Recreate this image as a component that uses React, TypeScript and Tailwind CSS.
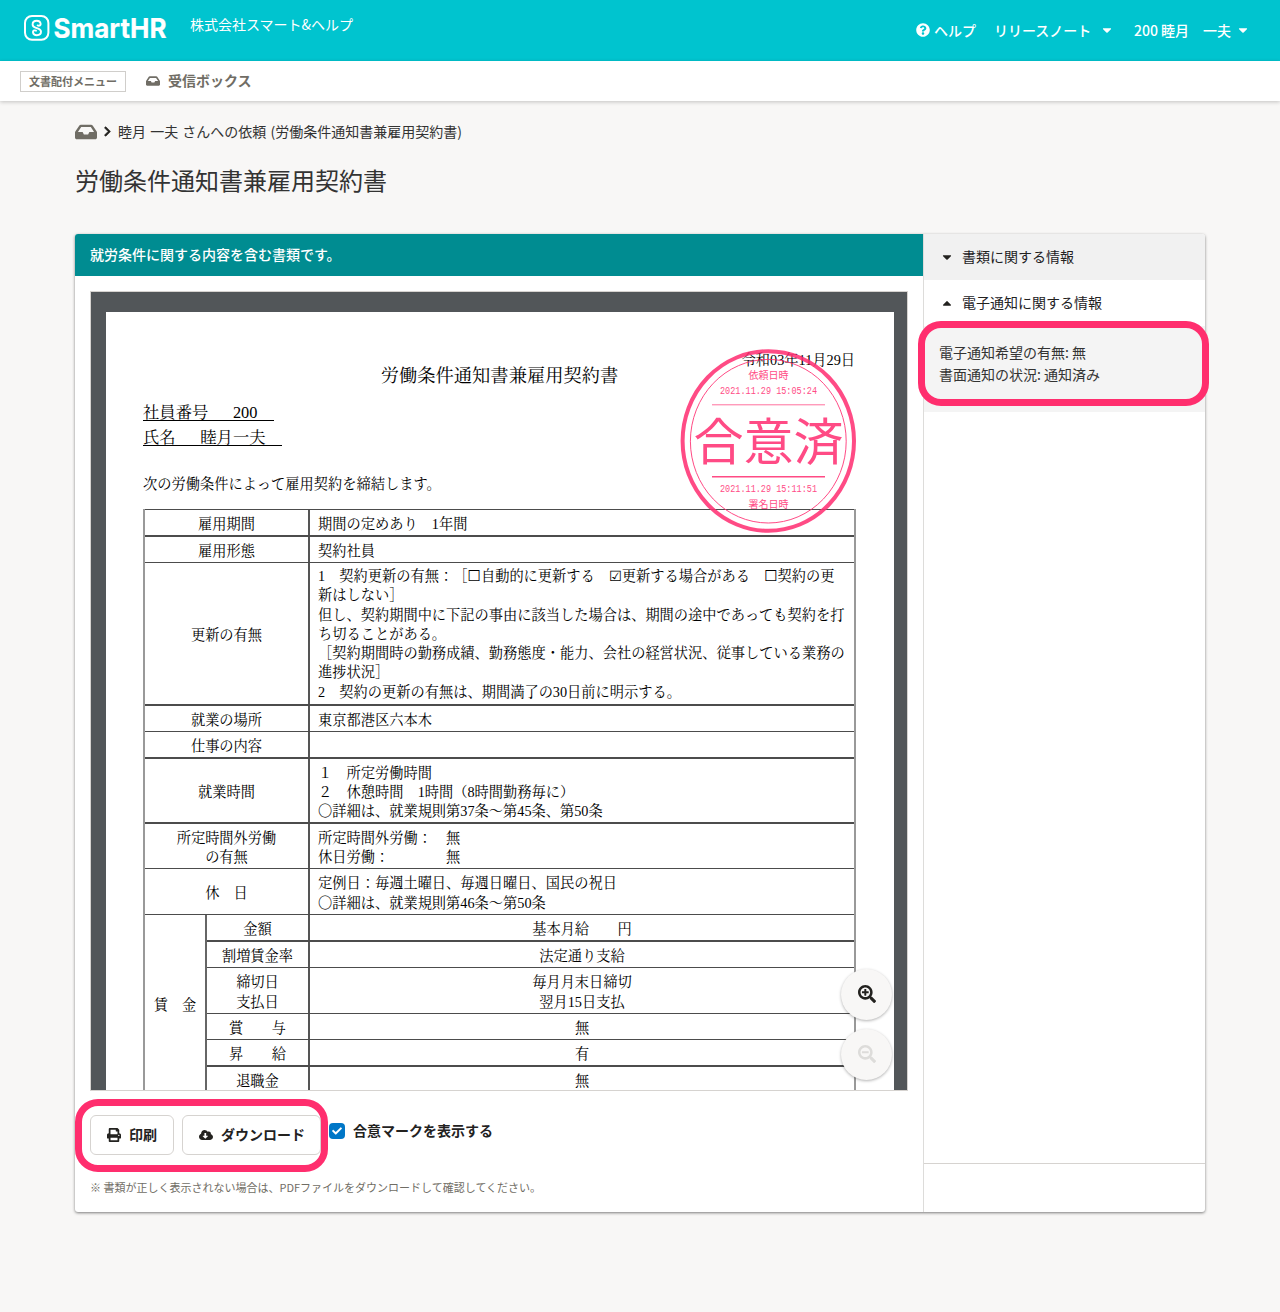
import React from "react";
import {
  FaInbox,
  FaQuestionCircle,
  FaCaretDown,
  FaCaretUp,
  FaPrint,
  FaCloudDownloadAlt,
  FaChevronRight,
  FaCheck,
  FaSearchPlus,
  FaSearchMinus,
} from "react-icons/fa";

function Logo() {
  return (
    <svg width="150" height="36" viewBox="0 0 150 36" className="block overflow-visible" aria-label="SmartHR">
      <rect x="2" y="2" width="23.4" height="23.8" rx="7" fill="none" stroke="#fff" strokeWidth="2" />
      <g fill="none" stroke="#fff" strokeWidth="1.9" strokeLinecap="round" strokeLinejoin="round">
        <path d="M14.6 11.4C16.6 12.2 18 11.2 17.6 9.4C17.2 7.7 15.6 6.8 13.8 6.8C11.4 6.8 9.6 8.3 9.6 10.4C9.6 12.2 10.8 13 12.4 13.6L15.2 14.6C16.8 15.2 18 16 18 17.8C18 19.9 16.2 21.2 13.8 21.2C11.6 21.2 10.3 20.1 10 18.5C9.7 16.8 11 15.9 13 16.7" />
      </g>
      <text x="30.5" y="24.2" fill="#fff" stroke="#fff" strokeWidth="0.2" fontFamily="Inter, sans-serif" fontWeight="700" fontSize="27.3" textLength="113" lengthAdjust="spacingAndGlyphs">
        SmartHR
      </text>
    </svg>
  );
}

function Header() {
  return (
    <header className="flex h-[61px] items-start justify-between bg-[#00c4cf] pr-[30px] pl-[23px] text-white">
      <div className="flex">
        <div className="h-[50px] w-[144px] pt-[14px]">
          <Logo />
        </div>
        <div className="ml-[23px] pt-[14px] leading-5">株式会社スマート&amp;ヘルプ</div>
      </div>
      <div className="flex items-center pt-5 leading-5 font-medium">
        <FaQuestionCircle className="mr-1 size-[14px]" />
        <span className="w-[60px]">ヘルプ</span>
        <span className="w-[106px]">リリースノート</span>
        <FaCaretDown className="size-[14px]" />
        <span className="ml-[20px] w-[102px]">200 睦月　一夫</span>
        <FaCaretDown className="size-[14px]" />
      </div>
    </header>
  );
}

function AppNav() {
  return (
    <nav className="relative flex h-10 items-center bg-white pl-5 font-bold text-[#706d65] shadow-[0_1px_4px_rgba(0,0,0,0.22)]">
      <div className="flex h-[21px] w-[106px] items-center justify-center border border-[#d0cecb] text-[11px]">文書配付メニュー</div>
      <FaInbox className="ml-5 size-[14px]" />
      <span className="ml-2 pb-[2px]">受信ボックス</span>
    </nav>
  );
}

type RowProps = { height: string; label: React.ReactNode; children?: React.ReactNode };

function Row({ height, label, children }: RowProps) {
  return (
    <div className={"flex border-[#4c4c4c] whitespace-pre " + height}>
      <div className="flex w-[163px] shrink-0 items-center justify-center pt-1 text-center">{label}</div>
      <div className="flex flex-1 items-center border-l-2 border-[#555] pt-1 pl-2">{children}</div>
    </div>
  );
}

function WageRow({ height, label, children }: RowProps) {
  return (
    <div className={"flex border-[#4c4c4c] text-center whitespace-pre " + height}>
      <div className="flex w-[101px] shrink-0 items-center justify-center pt-1">{label}</div>
      <div className="flex flex-1 items-center justify-center border-l-2 border-[#555] pt-1">{children}</div>
    </div>
  );
}

function Box() {
  return <span className="font-['DejaVu_Sans'] text-[15px] leading-none">☐</span>;
}

function Terms() {
  return (
    <div className="w-[713px] border-x-2 border-x-[#999] text-[14.24px] leading-[19.25px]">
      <Row height="h-[26px] border-t" label="雇用期間">期間の定めあり　1年間</Row>
      <Row height="h-[27px] border-t-2" label="雇用形態">契約社員</Row>
      <Row height="h-[142px] border-t" label="更新の有無">
        <div className="-mt-[2px]">
          1　契約更新の有無：［<Box />自動的に更新する　<span className="font-['DejaVu_Sans'] leading-none">☑</span>更新する場合がある　<Box />契約の更<br />
          新はしない］<br />
          但し、契約期間中に下記の事由に該当した場合は、期間の途中であっても契約を打<br />
          ち切ることがある。<br />
          ［契約期間時の勤務成績、勤務態度・能力、会社の経営状況、従事している業務の<br />
          進捗状況］<br />
          2　契約の更新の有無は、期間満了の30日前に明示する。
        </div>
      </Row>
      <Row height="h-[27px] border-t-2" label="就業の場所">東京都港区六本木</Row>
      <Row height="h-[26px] border-t" label="仕事の内容" />
      <Row height="h-[65px] border-t-2" label="就業時間">
        <div>
          １　所定労働時間<br />
          ２　休憩時間　1時間（8時間勤務毎に）<br />
          〇詳細は、就業規則第37条～第45条、第50条
        </div>
      </Row>
      <Row height="h-[46px] border-t-2" label={<div>所定時間外労働<br />の有無</div>}>
        <div>
          所定時間外労働：　無<br />
          休日労働：　　　　無
        </div>
      </Row>
      <Row height="h-[46px] border-t" label="休　日">
        <div>
          定例日：毎週土曜日、毎週日曜日、国民の祝日<br />
          〇詳細は、就業規則第46条～第50条
        </div>
      </Row>
      <div className="flex h-[179px] border-t border-[#4c4c4c]">
        <div className="flex w-[60px] shrink-0 items-center justify-center pt-1 whitespace-pre">賃　金</div>
        <div className="flex-1 border-l-2 border-[#666]">
          <WageRow height="h-[25px]" label="金額">基本月給　　円</WageRow>
          <WageRow height="h-[27px] border-t-2" label="割増賃金率">法定通り支給</WageRow>
          <WageRow height="h-[46px] border-t" label={<div>締切日<br />支払日</div>}>
            <div>毎月月末日締切<br />翌月15日支払</div>
          </WageRow>
          <WageRow height="h-[26px] border-t" label="賞　　与">無</WageRow>
          <WageRow height="h-[26px] border-t" label="昇　　給">有</WageRow>
          <WageRow height="h-[28px] border-t-2" label="退職金">無</WageRow>
        </div>
      </div>
    </div>
  );
}

function Stamp() {
  return (
    <svg className="absolute top-[36px] left-[574px]" width="177" height="186" viewBox="0 0 177 186" fill="#ff2e72" opacity="0.86" fontFamily="'Noto Sans CJK JP', sans-serif" textAnchor="middle">
      <ellipse cx="88.3" cy="93" rx="85.7" ry="89.8" fill="none" stroke="#ff2e72" strokeWidth="4" />
      <ellipse cx="88.3" cy="93.2" rx="77.9" ry="81.8" fill="none" stroke="#ff2e72" strokeWidth="1" />
      <text x="88.5" y="30.9" fontSize="10">依頼日時</text>
      <text x="88.5" y="45.8" fontSize="10.8" fontFamily="'Liberation Mono', monospace" textLength="97" lengthAdjust="spacingAndGlyphs">2021.11.29 15:05:24</text>
      <path d="M32 56.8H145" stroke="#ff2e72" strokeWidth="0.8" />
      <text x="88.5" y="112" fontSize="50">合意済</text>
      <path d="M32 128.8H145" stroke="#ff2e72" strokeWidth="1.4" />
      <text x="88.5" y="144.4" fontSize="10.8" fontFamily="'Liberation Mono', monospace" textLength="97" lengthAdjust="spacingAndGlyphs">2021.11.29 15:11:51</text>
      <text x="88.5" y="160.2" fontSize="10">署名日時</text>
    </svg>
  );
}

function Viewer() {
  return (
    <div className="relative h-[800px] overflow-hidden border border-[#d6d3d0] bg-[#525659] pt-5 pr-[13px] pl-[15px] [text-spacing-trim:space-all]">
      <div className="relative h-[900px] bg-white pl-[37px] font-['Liberation_Serif','Noto_Serif_CJK_JP','Noto_Sans_CJK_JP',serif] text-black">
        <div className="h-[52px] pt-[38px] pr-[39px] text-right text-[14.24px] leading-5">令和03年11月29日</div>
        <div className="pr-[38px] text-center text-[18.3px] leading-6">労働条件通知書兼雇用契約書</div>
        <div className="mt-[13px] text-[16.35px] leading-[24.5px] whitespace-pre">
          <div className="flex h-[24.5px] items-start"><span className="h-[20px] border-b border-black leading-[24px]">社員番号　&nbsp;&nbsp;200　</span></div>
          <div className="flex h-[24.5px] items-start"><span className="h-[20px] border-b border-black leading-[24px]">氏名　&nbsp;&nbsp;睦月一夫　</span></div>
        </div>
        <div className="mt-[24px] mb-[15px] text-[14.24px] leading-5">次の労働条件によって雇用契約を締結します。</div>
        <Terms />
        <Stamp />
      </div>
      <div className="absolute right-[15px] bottom-[10px] flex flex-col gap-[9px]">
        <button className="flex size-[51px] items-center justify-center rounded-full bg-[#f8f7f6] pb-px text-[#23221f] shadow-[0_1px_3px_rgba(0,0,0,0.3)]">
          <FaSearchPlus className="size-[18px]" />
        </button>
        <button className="flex size-[51px] items-center justify-center rounded-full bg-[#f8f7f6] pb-px text-[#dddcda] shadow-[0_1px_3px_rgba(0,0,0,0.3)]">
          <FaSearchMinus className="size-[18px]" />
        </button>
      </div>
    </div>
  );
}

function Actions() {
  return (
    <div className="relative mt-6 flex gap-2 font-bold">
      <button className="flex h-10 w-[84px] items-center rounded-md border border-[#d6d3d0] pl-4">
        <FaPrint className="mr-2 size-[14px]" />
        <span className="pb-[2px]">印刷</span>
      </button>
      <button className="flex h-10 w-[139px] items-center rounded-md border border-[#d6d3d0] pl-4">
        <FaCloudDownloadAlt className="mr-2 size-[14px]" />
        <span className="pb-[2px]">ダウンロード</span>
      </button>
      <label className="mt-[5px] flex h-[22px] items-center">
        <span className="mr-2 flex size-4 items-center justify-center rounded bg-[#0077c7] text-white">
          <FaCheck className="size-[10px]" />
        </span>
        <span className="pb-[2px]">合意マークを表示する</span>
      </label>
      <div className="absolute -top-4 -left-[15px] h-[73px] w-[253px] rounded-[23px] border-7 border-[#ff2e6e]" />
    </div>
  );
}

function Sidebar() {
  return (
    <aside className="flex w-[282px] flex-col border-l border-[#dddcda]">
      <div className="flex h-[46px] items-center rounded-tr-[3px] bg-[#f1f1f1] pl-4">
        <FaCaretDown className="mr-2 size-[14px]" />
        <span className="pb-[2px]">書類に関する情報</span>
      </div>
      <div className="flex h-[46px] items-center pl-4">
        <FaCaretUp className="mr-2 size-[14px]" />
        <span className="pb-[2px]">電子通知に関する情報</span>
      </div>
      <div className="relative h-[86px] bg-[#f4f4f4] pt-[15px] pl-[15px] leading-[22px] text-[#333]">
        <div>電子通知希望の有無: 無</div>
        <div>書面通知の状況: 通知済み</div>
        <div className="absolute -top-[5px] -left-[6px] h-[85px] w-[291px] rounded-[23px] border-7 border-[#ff2e6e]" />
      </div>
      <div className="mt-auto h-[49px] border-t border-[#d6d3d0]" />
    </aside>
  );
}

export default function App() {
  return (
    <div className="min-h-[1312px] bg-[#f8f7f6] font-['Noto_Sans_CJK_JP',sans-serif] text-[14px] text-[#23221f]">
      <Header />
      <AppNav />
      <main className="mx-[75px]">
        <div className="flex h-[61px] items-center">
          <FaInbox className="size-[22px] text-[#706d65]" />
          <FaChevronRight className="mx-[5px] size-[11px] stroke-current stroke-[30]" />
          <span className="pb-px text-[#333] [word-spacing:1px]">睦月 一夫 さんへの依頼 (労働条件通知書兼雇用契約書)</span>
        </div>
        <h1 className="h-[72px] text-2xl leading-9 text-[#333]">労働条件通知書兼雇用契約書</h1>
        <div className="flex h-[978px] rounded-[3px] bg-white shadow-[0_1px_3px_rgba(0,0,0,0.5)]">
          <section className="w-[848px]">
            <div className="flex h-[42px] items-center rounded-tl-[3px] bg-[#008c91] pb-[2px] pl-[15px] font-medium text-white">就労条件に関する内容を含む書類です。</div>
            <div className="px-[15px] pt-[15px]">
              <Viewer />
              <Actions />
              <p className="mt-6 text-[11px] leading-[17px] text-[#706d65]">※ 書類が正しく表示されない場合は、PDFファイルをダウンロードして確認してください。</p>
            </div>
          </section>
          <Sidebar />
        </div>
      </main>
    </div>
  );
}
